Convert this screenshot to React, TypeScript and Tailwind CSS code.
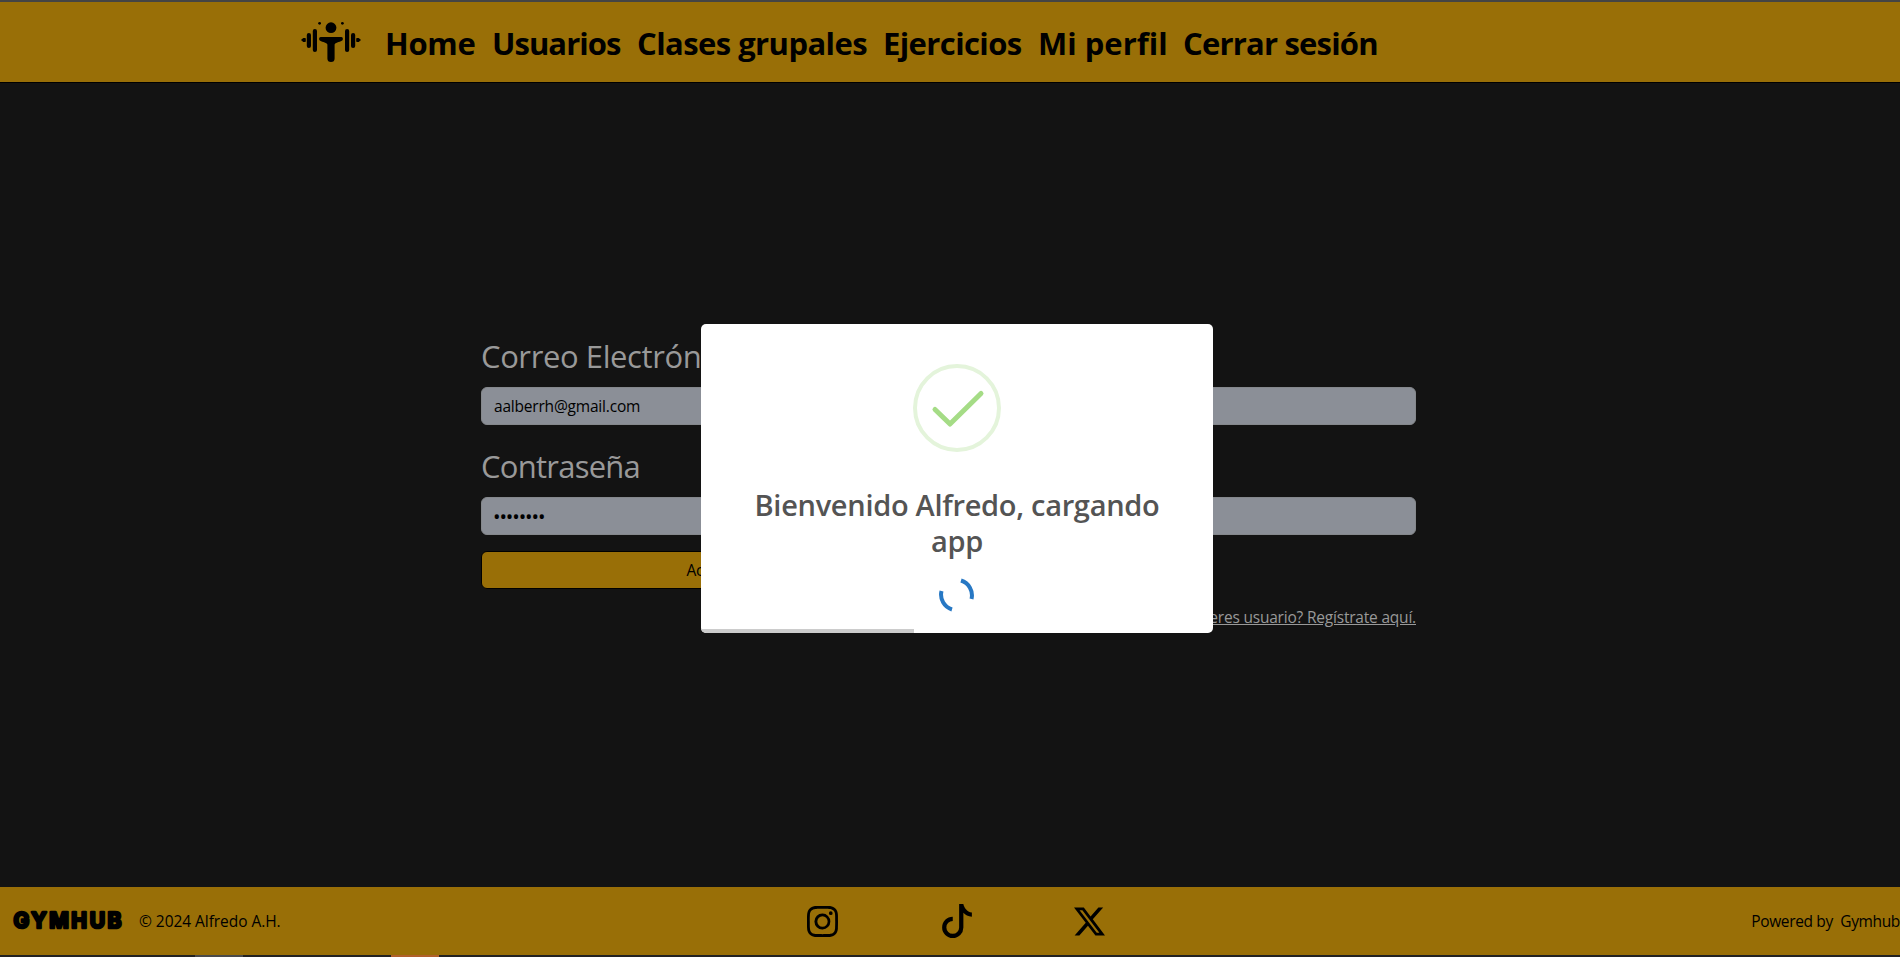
import React from "react";
import { BsInstagram, BsTiktok, BsTwitterX } from "react-icons/bs";

const links = [
  { label: "Home", box: "w-[107px]", track: "tracking-[-0.3px]" },
  { label: "Usuarios", box: "w-[145px]", track: "tracking-[-0.95px]" },
  { label: "Clases grupales", box: "w-[246px]", track: "tracking-[-0.57px]" },
  { label: "Ejercicios", box: "w-[155px]", track: "tracking-[-0.6px]" },
  { label: "Mi perfil", box: "w-[145px]", track: "tracking-[0px]" },
  { label: "Cerrar sesión", box: "w-[220px]", track: "tracking-[-0.8px]" },
];

function Logo() {
  return (
    <svg className="mt-[19px] ml-[300px] h-[44px] w-[62px] shrink-0" viewBox="300 21 62 44">
      <circle cx="331" cy="27.7" r="5.4" />
      <circle cx="319.6" cy="23.3" r="1.4" />
      <circle cx="342.4" cy="23.3" r="1.4" />
      <path d="M321 37H341.200C343 37 343.300 39 342.500 40.200C341 42 336 41.600 334.600 44.500V58.500A3.600 3.600 0 0 1 327.400 58.500V44.500C326 41.600 321 42 319.500 40.200C318.700 39 319 37 321 37Z" />
      <rect x="312.800" y="29" width="4.200" height="23" rx="2.100" />
      <rect x="306.800" y="33" width="4.200" height="15" rx="2.100" />
      <rect x="345" y="29" width="4.200" height="23" rx="2.100" />
      <rect x="351" y="33" width="4.200" height="15" rx="2.100" />
      <path d="M302 40l1.500-1.200h1.500v2.400h-1.500zM360 40l-1.500-1.200h-1.500v2.400h1.500z" stroke="#000" strokeLinejoin="round" strokeWidth="1.600" />
    </svg>
  );
}

function Header() {
  return (
    <header className="flex h-[83px] w-full shrink-0 border-t-2 border-b border-t-[#444] border-b-black bg-[#996f07]">
      <Logo />
      <nav className="ml-[23px] flex pt-[19px] text-[31px] leading-[44px] font-bold text-black">
        {links.map((l) => (
          <a key={l.label} className={`${l.box} ${l.track} shrink-0 whitespace-nowrap`}>
            {l.label}
          </a>
        ))}
      </nav>
    </header>
  );
}

function LoginForm() {
  return (
    <main className="ml-[481px] flex w-[935px] grow flex-col pt-[249px] text-[#999]">
      <label className="h-[55px] text-[31px] leading-[48px] tracking-[-0.4px] whitespace-nowrap">Correo Electrónico</label>
      <div className="flex h-[38px] items-center rounded-md border border-[#85888c] bg-[#8b8f97] px-3 text-[15.5px] text-black">
        <span className="pt-[2px] tracking-[-0.2px]">aalberrh@gmail.com</span>
      </div>
      <label className="mt-[17px] h-[55px] text-[31px] leading-[48px] tracking-[-0.75px]">Contraseña</label>
      <div className="flex h-[38px] items-center rounded-md border border-[#85888c] bg-[#8b8f97] px-3 text-[16px] text-black">
        <span className="-ml-px pt-[2px] text-[20px] leading-none tracking-[-1.1px]">••••••••</span>
      </div>
      <button className="mt-4 h-[38px] w-[468px] rounded-md border border-black bg-[#996f07] pt-[2px] text-[15.5px] tracking-[-0.1px] text-black">Acceder</button>
      <a className="mt-[16px] self-end text-[15.5px] leading-6 tracking-[-0.2px] underline">¿No eres usuario? Regístrate aquí.</a>
    </main>
  );
}

function Footer() {
  return (
    <footer className="flex h-[68px] w-full shrink-0 items-center overflow-hidden bg-[#996f07] text-[15.5px] text-black">
      <svg className="ml-[8px] h-[36px] w-[118px] shrink-0" viewBox="0 0 118 36">
        <text x="5.500" y="24.800" textLength="108" fontFamily="Inter, sans-serif" fontSize="21" fontWeight="700" stroke="#000" strokeWidth="2.600" strokeLinejoin="round">
          GYMHUB
        </text>
      </svg>
      <span className="ml-[13px] w-[668px] pt-[2px] tracking-[-0.05px]">© 2024 Alfredo A.H.</span>
      <BsInstagram className="size-[31px] shrink-0" />
      <BsTiktok className="ml-[102px] size-[34px] shrink-0" />
      <BsTwitterX className="ml-[100px] size-[31px] shrink-0" />
      <span className="ml-auto pt-[2px] whitespace-pre tracking-[-0.35px]">Powered by  Gymhub</span>
    </footer>
  );
}

function WelcomeDialog() {
  return (
    <div className="absolute top-[324px] left-[701px] flex h-[309px] w-[512px] flex-col items-center overflow-hidden rounded-[5px] bg-white">
      <svg className="mt-10 size-[88px] shrink-0" viewBox="0 0 88 88" fill="none">
        <circle cx="44" cy="44" r="42" stroke="#e4f4db" strokeWidth="4" />
        <path d="M22 45.500L37 60L68 29.500" stroke="#a5dc86" strokeWidth="5" strokeLinecap="round" strokeLinejoin="round" />
      </svg>
      <h2 className="mt-[35px] w-[425px] text-center text-[29px] leading-9 font-semibold tracking-[-0.3px] text-[#545454]">Bienvenido Alfredo, cargando app</h2>
      <svg className="mt-[18px] size-[36px] shrink-0" viewBox="0 0 36 36" fill="none" stroke="#2778c4" strokeWidth="4">
        <path d="M22 3.500A15.500 15.500 0 0 1 32.500 22" />
        <path d="M13 32.500A15.500 15.500 0 0 1 2.500 14" />
      </svg>
      <div className="mt-auto h-1 w-[213px] self-start bg-[#ccc]" />
    </div>
  );
}

export default function App() {
  return (
    <div className="relative flex h-[957px] w-[1900px] flex-col overflow-hidden bg-[#131313] font-['Open_Sans',sans-serif]">
      <Header />
      <LoginForm />
      <Footer />
      <div className="flex h-[2px] w-full shrink-0 bg-[#222]">
        <div className="ml-[195px] w-[48px] bg-[#4a4a4a]" />
        <div className="ml-[148px] w-[48px] bg-[#b0602a]" />
      </div>
      <WelcomeDialog />
    </div>
  );
}
